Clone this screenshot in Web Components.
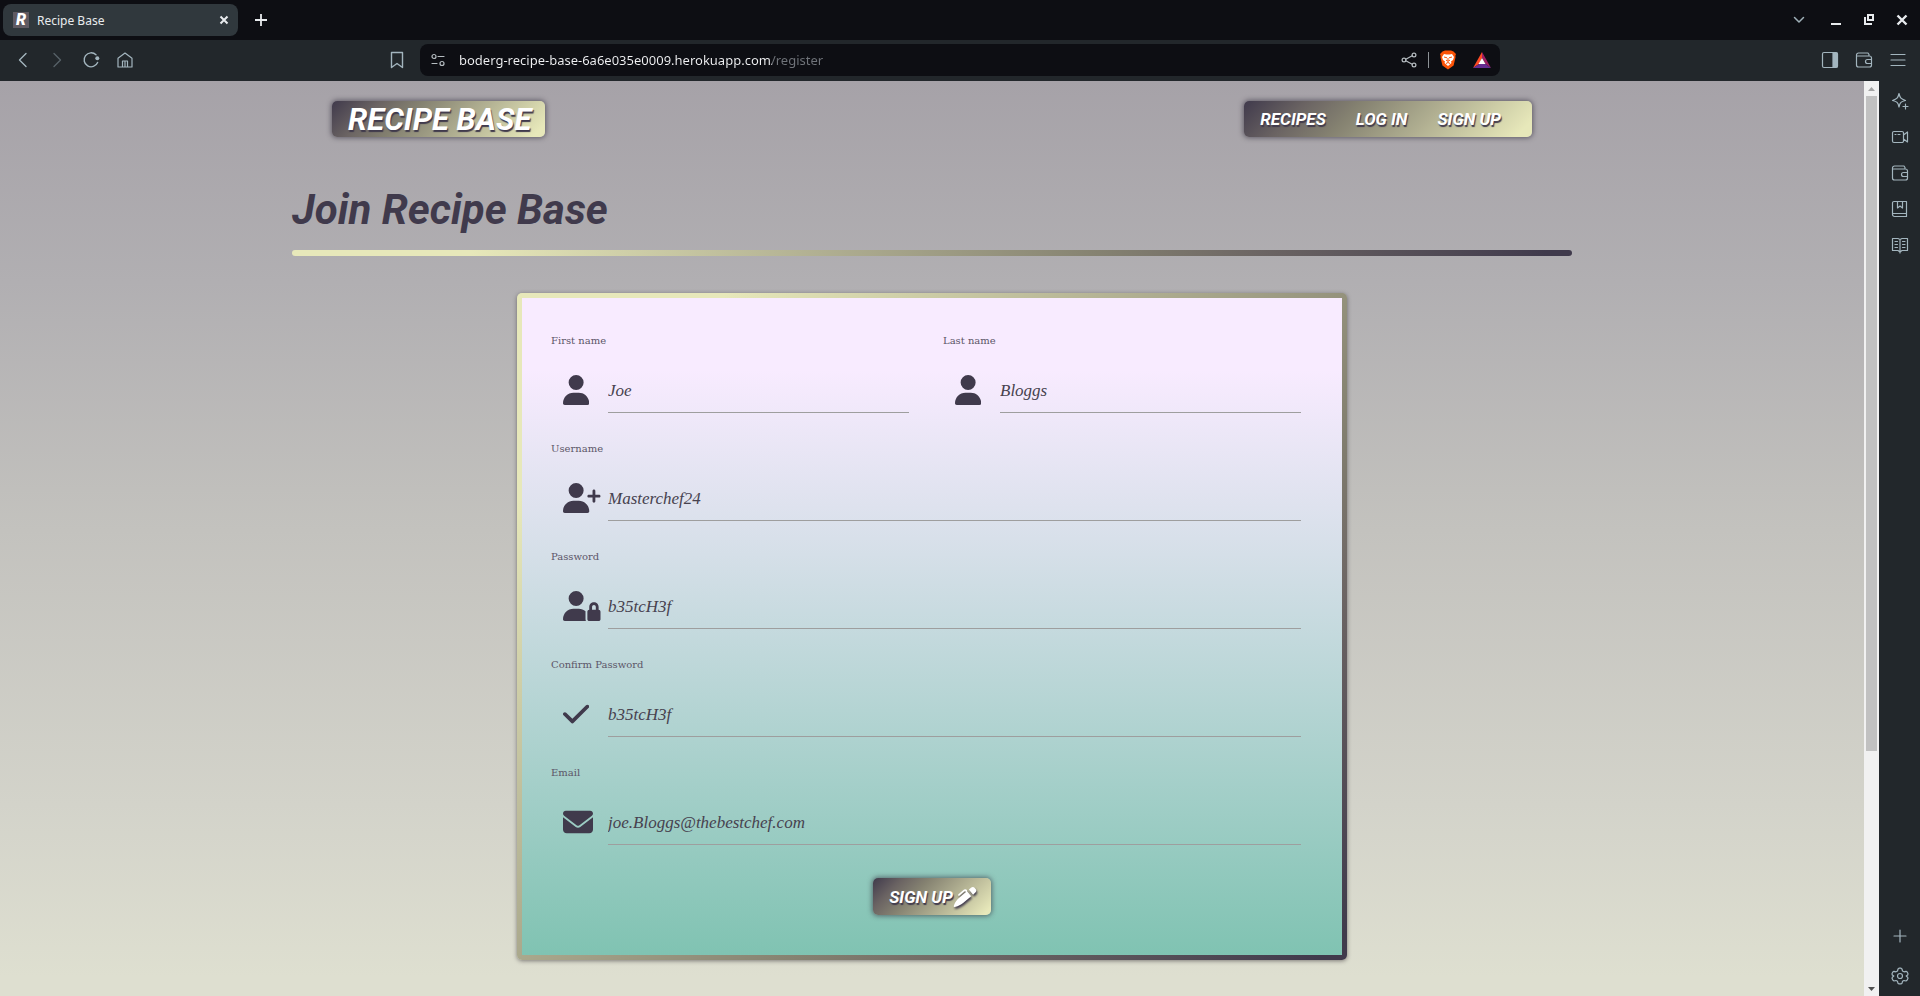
<!DOCTYPE html>
<html lang="en">
<head>
<meta charset="utf-8">
<title>Recipe Base</title>
<style>
html, body { margin: 0; height: 100%; }
body { font-family: "Noto Sans", sans-serif; overflow: hidden; }
</style>
</head>
<body>
<browser-window>
  <tab-strip slot="tabs"></tab-strip>
  <address-toolbar slot="toolbar"></address-toolbar>
  <site-page>
    <site-header></site-header>
    <page-title>Join Recipe Base</page-title>
    <register-form>
      <form-field class="half" label="First name" icon="user" placeholder="Joe"></form-field>
      <form-field class="half" label="Last name" icon="user" placeholder="Bloggs"></form-field>
      <form-field label="Username" icon="userPlus" placeholder="Masterchef24"></form-field>
      <form-field label="Password" icon="userLock" placeholder="b35tcH3f"></form-field>
      <form-field label="Confirm Password" icon="check" placeholder="b35tcH3f"></form-field>
      <form-field label="Email" icon="envelope" placeholder="joe.Bloggs@thebestchef.com"></form-field>
    </register-form>
  </site-page>
  <page-scrollbar slot="aside"></page-scrollbar>
  <side-rail slot="aside"></side-rail>
</browser-window>

<script>
const line = (body, size = 18, extra = '') =>
  `<svg width="${size}" height="${size}" viewBox="0 0 18 18" fill="none" stroke="currentColor" stroke-width="1.2" stroke-linecap="round" stroke-linejoin="round" aria-hidden="true" ${extra}>${body}</svg>`;

const icons = {
  close: line('<path d="M5.5 5.5l7 7M12.5 5.5l-7 7" stroke-width="2" stroke-linecap="butt"/>'),
  plusBold: line('<path d="M9 3v12M3 9h12" stroke-width="1.8" stroke-linecap="butt"/>'),
  plus: line('<path d="M9 3v12M3 9h12"/>'),
  chevron: line('<path d="M4.5 6.5L9 11l4.5-4.5" stroke-width="1.5"/>'),
  minimize: line('<path d="M4 13h10" stroke-width="2" stroke-linecap="butt"/>'),
  restore: line('<path d="M8 4h5v5H8z M5 6v7h7" stroke-width="2" stroke-linecap="butt" stroke-linejoin="miter"/>'),
  closeWin: line('<path d="M4.5 4.5l9 9M13.5 4.5l-9 9" stroke-width="2.4" stroke-linecap="butt"/>'),
  back: line('<path d="M12 2.5L5.5 9l6.5 6.5" stroke-width="1.4"/>'),
  forward: line('<path d="M6 2.5L12.5 9 6 15.5" stroke-width="1.4"/>'),
  reload: line('<path d="M14 3.8A7 7 0 1 0 15.6 11.5" stroke-width="1.4"/><circle cx="15.3" cy="7.2" r="2" fill="currentColor" stroke="none"/>'),
  home: line('<path d="M2 7.2L9 2l7 5.2V16H2zM6.5 16v-6h5v6M9 10v6"/>'),
  bookmark: line('<path d="M3.5 1.5h11v15L9 12.5l-5.5 4z" stroke-width="1.4"/>'),
  sliders: line('<circle cx="5" cy="5.5" r="2"/><path d="M9 5.5h6M3 12.5h5"/><circle cx="13" cy="12.5" r="2"/>'),
  share: line('<circle cx="4" cy="9" r="1.9"/><circle cx="14" cy="4" r="1.9"/><circle cx="14" cy="14" r="1.9"/><path d="M5.8 8.2l6.4-3.4M5.8 9.8l6.4 3.4"/>'),
  brave: `<svg width="18" height="20" viewBox="0 0 18 20" aria-hidden="true"><path d="M3.5 1.5L6 .5h6l2.5 1L17 4l-.7 2 .3 1-2 8.5L9 19.5 3.4 15.5 1.4 7l.3-1L1 4z" fill="#fb5307"/><path d="M5 4l2.5.5h3L13 4l2 3-1 3-2 1.5.5 1.5L9 16l-3.5-3 .5-1.5L4 10 3 7z" fill="#fff"/><path d="M5 7l3 .8M13 7l-3 .8M9 8v3M7 10l2 1.5 2-1.5M7 13.5l2-1 2 1" stroke="#fb5307" stroke-width="1" fill="none"/></svg>`,
  bat: `<svg width="18" height="18" viewBox="0 0 18 18" aria-hidden="true"><path d="M9 1v6l-3 6-6 4z" fill="#ff4a24"/><path d="M9 1v6l3.5 6L18 17z" fill="#9e1f63"/><path d="M0 17l6-4h6.5l5.5 4z" fill="#662d91"/><path d="M9 7l3.5 6h-7z" fill="#fff"/></svg>`,
  panel: line('<rect x="1.5" y="1.5" width="15" height="15" rx="1.5"/><path d="M12 2h4v14h-4z" fill="currentColor"/>'),
  wallet: line('<path d="M14 5V3.5L13 2H3.5A2 2 0 0 0 1.5 4v10a2 2 0 0 0 2 2H14.5a2 2 0 0 0 2-2V7a2 2 0 0 0-2-2H2.5M16.5 8.5h-4a2 2 0 0 0 0 4h4"/>'),
  menu: line('<path d="M2 3.5h14M2 9h14M2 14.5h14"/>'),
  sparkle: line('<path d="M8 1.5c1 4.5 2 5.5 6.5 7-4.5 1-5.5 2-6.5 6.5-1-4.5-2-5.5-6.5-6.5C6 7 7 6 8 1.5zM14.5 12v5M12 14.5h5"/>'),
  camera: line('<path d="M3 3.5h8a1.5 1.5 0 0 1 1.5 1.5v8a1.5 1.5 0 0 1-1.5 1.5H3A1.5 1.5 0 0 1 1.5 13V5A1.5 1.5 0 0 1 3 3.5zM12.5 7l4-3v10l-4-3M4 6.5h1M7 6.5h2"/>'),
  book: line('<path d="M3 1.5h12.5V16.5H3.5a2 2 0 0 1-2-2V3A1.5 1.5 0 0 1 3 1.5zM1.5 13.5h14M6.5 1.5V8L9 6l2.5 2V1.5"/>'),
  reader: line('<path d="M1.5 2.5H7l2 1 2-1h5.5v12H11l-2 1.5-2-1.5H1.5zM9 3.5V17M4 5.5h2.5M4 8.5h2.5M4 11.5h2.5M11.5 5.5H14M11.5 8.5H14M11.5 11.5H14"/>'),
  gear: line('<circle cx="9" cy="9" r="2.5"/><path d="M7 2l1-.8h2l1 .8.5 2 1.5.8 2-.5 1.2.8.8 1.7-.3 1.2L15.2 9l1.5 1.3.3 1-.8 1.8-1.2.9-2-.5-1.5.8-.5 2-1 .6H8l-1-.6-.5-2-1.5-.8-2 .5-1.2-.9-.8-1.8.3-1L2.8 9 1.3 8 1 6.8l.8-1.7L3 4.3l2 .5L6.5 4z"/>'),
};

const fa = (w, d) => `<svg height="30" viewBox="0 0 ${w} 512" fill="currentColor" aria-hidden="true"><path d="${d}"/></svg>`;
const fieldIcons = {
  user: fa(448, 'M224 256A128 128 0 1 0 224 0a128 128 0 1 0 0 256zm-45.7 48C79.8 304 0 383.8 0 482.3C0 498.7 13.3 512 29.7 512H418.3c16.4 0 29.7-13.3 29.7-29.7C448 383.8 368.2 304 269.7 304H178.3z'),
  userPlus: fa(640, 'M96 128a128 128 0 1 1 256 0A128 128 0 1 1 96 128zM0 482.3C0 383.8 79.8 304 178.3 304h91.4C368.2 304 448 383.8 448 482.3c0 16.4-13.3 29.7-29.7 29.7H29.7C13.3 512 0 498.7 0 482.3zM504 312V248H440c-13.3 0-24-10.7-24-24s10.7-24 24-24h64V136c0-13.3 10.7-24 24-24s24 10.7 24 24v64h64c13.3 0 24 10.7 24 24s-10.7 24-24 24H552v64c0 13.3-10.7 24-24 24s-24-10.7-24-24z'),
  userLock: fa(640, 'M224 256A128 128 0 1 0 224 0a128 128 0 1 0 0 256zm-45.7 48C79.8 304 0 383.8 0 482.3C0 498.7 13.3 512 29.7 512H392.6c-5.4-9.4-8.6-20.3-8.6-32V352c0-2.1 .1-4.2 .3-6.3c-31-26-71-41.7-114.6-41.7H178.3zM528 240c17.7 0 32 14.3 32 32v48H496V272c0-17.7 14.3-32 32-32zm-80 32v48c-17.7 0-32 14.3-32 32V480c0 17.7 14.3 32 32 32H608c17.7 0 32-14.3 32-32V352c0-17.7-14.3-32-32-32V272c0-44.2-35.8-80-80-80s-80 35.8-80 80z'),
  check: fa(448, 'M438.6 105.4c12.5 12.5 12.5 32.8 0 45.3l-256 256c-12.5 12.5-32.8 12.5-45.3 0l-128-128c-12.5-12.5-12.5-32.8 0-45.3s32.8-12.5 45.3 0L160 338.7 393.4 105.4c12.5-12.5 32.8-12.5 45.3 0z'),
  envelope: fa(512, 'M48 64C21.5 64 0 85.5 0 112c0 15.1 7.1 29.3 19.2 38.4L236.8 313.6c11.4 8.5 27 8.5 38.4 0L492.8 150.4c12.1-9.1 19.2-23.3 19.2-38.4c0-26.5-21.5-48-48-48H48zM0 176V384c0 35.3 28.7 64 64 64H448c35.3 0 64-28.7 64-64V176L294.4 339.2c-22.8 17.1-54 17.1-76.8 0L0 176z'),
};

const base = `
  :host { box-sizing: border-box; }
  *, *::before, *::after { box-sizing: border-box; }
  svg { display: block; flex: none; }
  button { border: 0; padding: 0; background: none; color: inherit; font: inherit; display: flex; align-items: center; justify-content: center; }
  a { color: inherit; text-decoration: none; }
`;
const ramp = '#403a4c 0%, #6b6463 20%, #858271 37%, #e7e8ba 95%';
const rampBack = '#e7e8ba 0%, #e7e8ba 14%, #858271 63%, #6b6463 76%, #403a4c 98%';
const plate = `
  background: linear-gradient(135deg, ${ramp});
  border-radius: 5px;
  box-shadow: 0 0 5px 1px rgba(50, 45, 60, .6);
  color: #fff;
  font-family: Roboto, sans-serif;
  font-weight: 700;
  font-style: italic;
  text-transform: uppercase;
  text-shadow: 1px 2px 1px #403a4c;
`;

function define(name, css, html) {
  customElements.define(name, class extends HTMLElement {
    connectedCallback() {
      if (this.shadowRoot) return;
      const root = this.attachShadow({ mode: 'open' });
      root.innerHTML = `<style>${base}${css}</style>` + (typeof html === 'function' ? html(this) : html);
    }
  });
}

define('browser-window', `
  :host { display: flex; flex-direction: column; height: 100vh; background: #22272b; }
  .body { flex: 1; min-height: 0; display: flex; }
  .view { flex: 1; min-width: 0; overflow: hidden; display: flex; }
`, `<slot name="tabs"></slot><slot name="toolbar"></slot>
    <div class="body"><div class="view"><slot></slot></div><slot name="aside"></slot></div>`);

define('tab-strip', `
  :host { display: flex; align-items: center; height: 40px; padding: 0 9px 0 3px; background: #0d0e13; color: #e8ebee; }
  .tab { display: flex; align-items: center; width: 235px; height: 32px; padding: 0 5px 0 10px; background: #30383d; border-radius: 8px; font-size: 12px; }
  .fav { display: flex; align-items: center; justify-content: center; width: 16px; height: 16px; margin-right: 8px; background: #5f5a62; color: #fff; font: italic 900 16px/16px Roboto, sans-serif; }
  .tab span { flex: 1; }
  .new { margin-left: 14px; }
  .win { margin-left: auto; display: flex; align-items: center; gap: 15px; }
  .win button:first-child { margin-right: 4px; color: #9fb0b8; }
`, `<div class="tab"><i class="fav">R</i><span>Recipe Base</span><button aria-label="Close tab">${icons.close}</button></div>
    <button class="new" aria-label="New tab">${icons.plusBold}</button>
    <div class="win">
      <button aria-label="Search tabs">${icons.chevron}</button>
      <button aria-label="Minimize">${icons.minimize}</button>
      <button aria-label="Restore">${icons.restore}</button>
      <button aria-label="Close">${icons.closeWin}</button>
    </div>`);

define('address-toolbar', `
  :host { display: grid; grid-template-columns: 420px minmax(0, 1fr) 420px; align-items: center; height: 41px; padding-bottom: 1px; background: #22272b; color: #a3b5be; }
  .left, .right { display: flex; align-items: center; gap: 16px; padding: 0 14px; }
  .left .mark { margin-left: auto; }
  .off { color: #566167; }
  .right { justify-content: flex-end; padding-right: 13px; }
  .bar { display: flex; align-items: center; height: 32px; padding: 0 9px; border-radius: 8px; background: #0d0e13; color: #b5bcc0; }
  input { flex: 1; min-width: 0; height: 30px; margin: 0 12px; padding: 0; border: 0; outline: 0; font: 13px "Noto Sans", sans-serif;
    color: transparent; background: linear-gradient(90deg, #f1f2f4 313px, #70747a 313px); -webkit-background-clip: text; background-clip: text; }
  hr { width: 1px; height: 16px; margin: 0 10px; border: 0; background: #8c9296; }
  .shield { margin-right: 16px; }
`, `<div class="left">
      <button aria-label="Back">${icons.back}</button>
      <button class="off" aria-label="Forward">${icons.forward}</button>
      <button aria-label="Reload">${icons.reload}</button>
      <button aria-label="Home">${icons.home}</button>
      <button class="mark" aria-label="Bookmark">${icons.bookmark}</button>
    </div>
    <div class="bar">
      <button aria-label="Site settings">${icons.sliders}</button>
      <input aria-label="Address" spellcheck="false" value="boderg-recipe-base-6a6e035e0009.herokuapp.com/register">
      <button aria-label="Share">${icons.share}</button><hr>
      <button class="shield" aria-label="Shields">${icons.brave}</button>
      <button aria-label="Rewards">${icons.bat}</button>
    </div>
    <div class="right">
      <button aria-label="Sidebar">${icons.panel}</button>
      <button aria-label="Wallet">${icons.wallet}</button>
      <button aria-label="Menu">${icons.menu}</button>
    </div>`);

define('page-scrollbar', `
  :host { display: grid; grid-template-rows: 15px minmax(0, 1fr) 15px; width: 15px; background: #f1f1f1; }
  .thumb { height: 74%; margin: 0 2px; background: #c1c1c1; }
  svg { margin: auto; }
`, `<svg width="7" height="4" viewBox="0 0 7 4"><path d="M0 4L3.5 0 7 4z" fill="#a3a3a3"/></svg>
    <div class="thumb"></div>
    <svg width="7" height="4" viewBox="0 0 7 4"><path d="M0 0h7L3.5 4z" fill="#505050"/></svg>`);

define('side-rail', `
  :host { display: flex; flex-direction: column; align-items: center; gap: 18px; width: 41px; padding: 11px 0; background: #22272b; color: #a3b5be; }
  .low { margin-top: auto; margin-bottom: 4px; }
`, `<button aria-label="Assistant">${icons.sparkle}</button>
    <button aria-label="Talk">${icons.camera}</button>
    <button aria-label="Wallet">${icons.wallet}</button>
    <button aria-label="Bookmarks">${icons.book}</button>
    <button aria-label="Reading list">${icons.reader}</button>
    <button class="low" aria-label="Add">${icons.plus}</button>
    <button aria-label="Settings">${icons.gear}</button>`);

define('site-page', `
  :host { display: block; flex: 1; min-width: 0; padding-top: 20px;
    background: linear-gradient(180deg, #a6a2a8 0%, #b1afb2 22%, #c3c2be 49%, #d3d3ca 79%, #dedfd0 98%); color: #403a4c; }
  main { max-width: 1280px; margin: 0 auto; }
`, `<main><slot></slot></main>`);

define('site-header', `
  :host { display: flex; justify-content: space-between; padding: 0 40px; }
  .logo, nav { display: flex; align-items: center; height: 36px; ${plate} }
  .logo { padding: 0 14px 0 16px; font-size: 31px; }
  nav { gap: 30px; padding: 0 31px 0 16px; font-size: 17px; }
`, `<a class="logo" href="#">Recipe Base</a>
    <nav><a href="#">Recipes</a><a href="#">Log In</a><a href="#">Sign Up</a></nav>`);

define('page-title', `
  :host { display: block; margin-bottom: 37px; }
  h1 { margin: 0; padding: 45px 0 13px; font: italic 700 42px/55px Roboto, sans-serif; }
  hr { height: 6px; margin: 0; border: 0; border-radius: 3px; background: linear-gradient(90deg, ${rampBack}); }
`, `<h1><slot></slot></h1><hr>`);

define('register-form', `
  :host { display: block; max-width: 830px; margin: 0 auto; border: 5px solid transparent; border-radius: 5px;
    background: linear-gradient(180deg, #f8ebff 0%, #f8ebff 11%, #d5dfe8 39%, #80c3b2 100%) padding-box, linear-gradient(135deg, ${rampBack}) border-box;
    box-shadow: 0 1px 4px rgba(60, 55, 60, .6); }
  form { display: flex; flex-wrap: wrap; justify-content: center; padding: 34px 18px 40px; }
  ::slotted(form-field) { flex: 0 0 100%; }
  ::slotted(.half) { flex-basis: 50%; }
  button { height: 37px; margin-top: 6px; padding: 0 16px; ${plate} font-size: 17px; }
  svg { margin-left: 2px; filter: drop-shadow(1px 2px 1px #403a4c); overflow: visible; }
`, `<form onsubmit="return false"><slot></slot>
    <button type="submit">Sign Up<svg width="20" height="20" viewBox="0 0 512 512" fill="currentColor" aria-hidden="true"><g transform="translate(50 0) skewX(-10)"><path d="M453.3 19.3l39.4 39.4c25 25 25 65.5 0 90.5l-46 46-130-130 46.100-46c25-25 65.500-25 90.500 0zM241 114.9c-9.4-9.4-24.6-9.4-33.9 0L105 217c-9.4 9.4-24.6 9.4-33.9 0s-9.4-24.6 0-33.9L173.1 81c28.1-28.1 73.7-28.1 101.8 0L278 108 406 236 229.5 412.5c-48 48-109.2 80.2-175.8 93.5l-24 5c-16 3-30-11-27-27l4.8-24c13.3-66.6 45.8-127.8 93.8-175.8L254.1 128z"/></g></svg></button></form>`);

define('form-field', `
  :host { display: flex; flex-direction: column; height: 108px; padding: 0 23px 0 11px; }
  label { font: 10px/18px "DejaVu Serif", serif; color: #5c5668; }
  .row { display: flex; align-items: flex-start; margin-top: 17px; }
  .icon { width: 45px; margin: 8px 0 0 12px; flex: none; }
  input { flex: 1; min-width: 0; height: 46px; padding: 2px 0 0; border: 0; border-bottom: 1px solid #9e9e9e; outline: 0; background: none;
    font: italic 17px "Liberation Serif", serif; color: #403a4c; }
  input::placeholder { color: #47424f; opacity: 1; }
`, el => `<label for="field">${el.getAttribute('label')}</label>
    <div class="row"><span class="icon">${fieldIcons[el.getAttribute('icon')]}</span>
    <input id="field" type="text" placeholder="${el.getAttribute('placeholder')}"></div>`);
</script>
</body>
</html>
